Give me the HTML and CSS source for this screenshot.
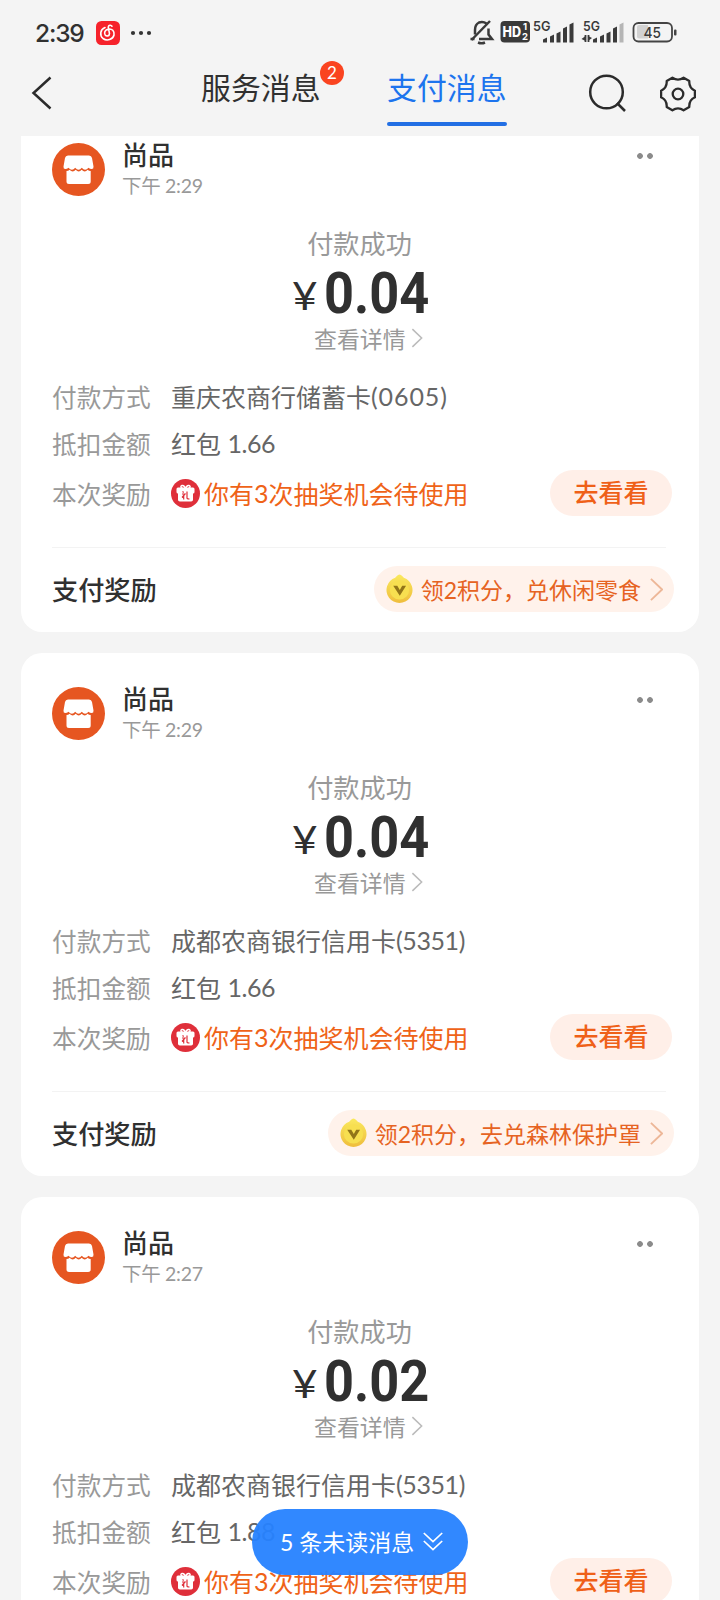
FILE: index.html
```html
<!DOCTYPE html>
<html lang="zh-CN">
<head>
<meta charset="utf-8">
<title>支付消息</title>
<link rel="stylesheet" href="styles.css">
</head>
<body>
<svg class="defs" width="0" height="0">
  <defs>
    <linearGradient id="gold" x1="0" y1="0" x2="0" y2="1"><stop offset="0" stop-color="#fae95e"/><stop offset="1" stop-color="#efbd3c"/></linearGradient>
    <symbol id="shop" viewBox="0 0 53 53">
      <circle cx="26.500" cy="26.500" r="26.500" fill="#e65621"/>
      <path d="M17 12.500h20q2.500 0 3 2.500l1.500 8.500q.3 2.500-1.800 2.500-1.800 0-3.200-1.200-1.700 2-3.400 2t-3.300-2q-1.600 2-3.300 2t-3.300-2q-1.600 2-3.300 2t-3.400-2q-1.400 1.200-3.200 1.200-2.100 0-1.800-2.500l1.500-8.500q.5-2.500 3-2.500z" fill="#fff"/>
      <path d="M14.500 28q2 0 3-1.200 1.700 1.800 3.200 1.800t3-1.800q1.500 1.800 3 1.800t3-1.800q1.500 1.800 3 1.800t3-1.800q1 1.200 3 1.200v10.500q0 2.500-2.500 2.500h-19.200q-2.500 0-2.500-2.500z" fill="#fff"/>
    </symbol>
    <symbol id="gift" viewBox="0 0 29 29">
      <circle cx="14.500" cy="14.500" r="14.500" fill="#df2f3a"/>
      <rect x="5.500" y="8.500" width="18" height="6" rx="1.500" fill="#fff"/>
      <rect x="7" y="12" width="15" height="10.500" rx="1.800" fill="#fff"/>
      <path d="M14.500 10c-5 0-5.500-3-3.500-3.500 1.800-.3 3 1.500 3.500 3.500.5-2 1.700-3.800 3.500-3.500 2 .5 1.500 3.500-3.500 3.500z" fill="none" stroke="#fff" stroke-width="1.500"/>
      <path d="M11.500 12.500l1.200 1M11 15h3l-3 3.500M12.700 16v4.500M16 12.500v6.500q0 1 2.500 1" fill="none" stroke="#df2f3a" stroke-width="1.200"/>
    </symbol>
    <symbol id="coin" viewBox="0 0 28 31">
      <path d="M14 .5q1.500 0 3 1.800l1.500 1.500a13.500 13.500 0 1 1-9 0l1.500-1.500q1.500-1.800 3-1.800z" fill="url(#gold)"/>
      <circle cx="14" cy="16.500" r="10" fill="#f7df50"/>
      <path d="M7.500 12h4.200l2.600 4.500 2.500-4.500h4l-6.500 10.500z" fill="#927518"/>
    </symbol>
    <symbol id="next" viewBox="0 0 14 26"><path d="M1 1.500l12 11.500-12 11.500" fill="none" stroke="currentColor" stroke-width="2"/></symbol>
  </defs>
</svg>

<div class="screen">
  <header class="statusbar">
    <span class="clock">2:39</span>
    <svg class="music" viewBox="0 0 24 24"><rect width="24" height="24" rx="5.500" fill="#f6222b"/><path d="M9 6.500c-5 2-5.500 8-2 11 4 3 10 1 11-3.500.6-4-2-6.500-5.500-6-3.500.7-4.800 3.800-3.300 6 1.300 1.600 4.300 1.200 4.300-1.500L12.300 6.500q0-2.500 2-2.300 1 .1 1.700 1" fill="none" stroke="#fff" stroke-width="1.600" stroke-linecap="round"/></svg>
    <svg class="more" viewBox="0 0 22 6" fill="#333"><circle cx="3" cy="3" r="2.100"/><circle cx="11" cy="3" r="2.100"/><circle cx="19" cy="3" r="2.100"/></svg>
    <svg class="system" viewBox="0 -6 210 38">
      <g fill="none" stroke="#3a3a3a" stroke-width="2.500">
        <path d="M16.500 3.500Q13 1 9 2.500 5 4.500 5 10v4.500M18.500 8.500v6l3.500 4.500H9"/>
        <path d="M20 1L1.500 20"/><path d="M.5 19h4M8 22.500q3.500 1.500 7 0"/>
      </g>
      <rect x="30.500" y="1" width="29.500" height="21.500" rx="4" fill="#3a3a3a"/>
      <text class="hd" x="32.500" y="16.500" textLength="18.500" lengthAdjust="spacingAndGlyphs">HD</text><text class="tiny" x="53" y="10">1</text><text class="tiny" x="52" y="20">2</text>
      <text class="net" x="63" y="11" textLength="17.500" lengthAdjust="spacingAndGlyphs">5G</text>
      <g fill="#3a3a3a"><path d="M73 22.500v-3l4-2v5zM80 22.500v-6l4-2v8zM86.500 22.500v-9l4-2v11zM93 22.500V8.500l4-2v16zM99.500 22.500V4.500l4-2v20z"/></g>
      <text class="net" x="113" y="11" textLength="17" lengthAdjust="spacingAndGlyphs">5G</text>
      <path d="M115.500 15v7M118.500 22v-7" stroke="#3a3a3a" stroke-width="1.800"/>
      <path d="M111.500 19l4-3v5zM122 18l-4 3v-5z" fill="#3a3a3a"/>
      <path d="M123 22.500v-3l4-2v5zM130 22.500v-6l4-2v8zM136.500 22.500v-9l4-2v11zM143 22.500V8.500l4-2v16z" fill="#3a3a3a"/><path d="M149.500 22.500V4.500l4-2v20z" fill="#b5b5b5"/>
      <path d="M169 5h9v13.500h-9q-2 0-2-2V7q0-2 2-2z" fill="#d2d2d2"/>
      <rect x="163.500" y="3" width="38.500" height="18.500" rx="5" fill="none" stroke="#444" stroke-width="1.800"/>
      <rect x="204" y="9.500" width="2.500" height="6" rx="1" fill="#444"/>
      <text class="batt" x="173.500" y="17.800" textLength="17.500" lengthAdjust="spacingAndGlyphs">45</text>
    </svg>
  </header>

  <nav class="navbar">
    <svg class="back" viewBox="0 0 22 34"><path d="M19.500 1.500L2.500 17l17 15.500" fill="none" stroke="#2b2b2b" stroke-width="2.500"/></svg>
    <div class="tab tab-service">服务消息<span class="badge">2</span></div>
    <div class="tab tab-pay">支付消息</div>
    <svg class="search" viewBox="0 0 40 40" fill="none" stroke="#2b2b2b" stroke-width="2.500"><circle cx="18.500" cy="18" r="16.300"/><path d="M29 29l8 8"/></svg>
    <svg class="gear" viewBox="0 0 36 36" fill="none" stroke="#2b2b2b" stroke-width="2.300" stroke-linejoin="round"><path d="M34.900 14.700V21.300Q28.800 24.200 29.300 31L23.600 34.300Q18 30.500 12.400 34.300L6.700 31Q7.200 24.200 1.100 21.300V14.700Q7.200 11.800 6.700 5L12.400 1.700Q18 5.500 23.600 1.700L29.300 5Q28.800 11.800 34.900 14.700z"/><circle cx="18" cy="18" r="5.300"/></svg>
  </nav>

  <main class="feed">
    <article class="card">
      <header class="merchant"><svg class="avatar"><use href="#shop"/></svg><div><h2>尚品</h2><time>下午 2:29</time></div><i class="dots"></i></header>
      <p class="state">付款成功</p>
      <p class="amount"><span class="yen">¥</span><b>0.04</b></p>
      <a class="detail">查看详情<svg><use href="#next"/></svg></a>
      <dl>
        <div><dt>付款方式</dt><dd>重庆农商行储蓄卡<span class="num">(0605)</span></dd></div>
        <div><dt>抵扣金额</dt><dd>红包 <span class="num narrow">1.66</span></dd></div>
        <div class="award"><dt>本次奖励</dt><dd><svg><use href="#gift"/></svg>你有<span>3</span>次抽奖机会待使用</dd><button>去看看</button></div>
      </dl>
      <footer><h3>支付奖励</h3><a class="pill"><svg class="coin"><use href="#coin"/></svg>领2积分，兑休闲零食<svg class="arrow"><use href="#next"/></svg></a></footer>
    </article>

    <article class="card">
      <header class="merchant"><svg class="avatar"><use href="#shop"/></svg><div><h2>尚品</h2><time>下午 2:29</time></div><i class="dots"></i></header>
      <p class="state">付款成功</p>
      <p class="amount"><span class="yen">¥</span><b>0.04</b></p>
      <a class="detail">查看详情<svg><use href="#next"/></svg></a>
      <dl>
        <div><dt>付款方式</dt><dd>成都农商银行信用卡<span class="num narrow">(5351)</span></dd></div>
        <div><dt>抵扣金额</dt><dd>红包 <span class="num narrow">1.66</span></dd></div>
        <div class="award"><dt>本次奖励</dt><dd><svg><use href="#gift"/></svg>你有<span>3</span>次抽奖机会待使用</dd><button>去看看</button></div>
      </dl>
      <footer><h3>支付奖励</h3><a class="pill"><svg class="coin"><use href="#coin"/></svg>领2积分，去兑森林保护罩<svg class="arrow"><use href="#next"/></svg></a></footer>
    </article>

    <article class="card">
      <header class="merchant"><svg class="avatar"><use href="#shop"/></svg><div><h2>尚品</h2><time>下午 2:27</time></div><i class="dots"></i></header>
      <p class="state">付款成功</p>
      <p class="amount"><span class="yen">¥</span><b>0.02</b></p>
      <a class="detail">查看详情<svg><use href="#next"/></svg></a>
      <dl>
        <div><dt>付款方式</dt><dd>成都农商银行信用卡<span class="num narrow">(5351)</span></dd></div>
        <div><dt>抵扣金额</dt><dd>红包 <span class="num narrow">1.88</span></dd></div>
        <div class="award"><dt>本次奖励</dt><dd><svg><use href="#gift"/></svg>你有<span>3</span>次抽奖机会待使用</dd><button>去看看</button></div>
      </dl>
    </article>
  </main>
  <div class="unread">5 条未读消息<svg viewBox="0 0 20 19" fill="none" stroke="#fff" stroke-width="1.700"><path d="M.8 1l9.200 8.500L19.200 1M.8 9l9.200 8.500L19.200 9"/></svg></div>
</div>
</body>
</html>
```

FILE: styles.css
```css
* { box-sizing: border-box; margin: 0; padding: 0; }
body { background: #f4f4f4; color: #303030; font-family: Lato, "Noto Sans CJK SC", sans-serif; font-weight: 400; }
svg { display: block; flex: none; }
.defs { position: absolute; }
.screen { position: relative; width: 720px; height: 1600px; overflow: hidden; display: flex; flex-direction: column; }

.statusbar { height: 60px; display: flex; align-items: center; padding: 6px 39px 0 35px; flex: none; }
.clock { font: 500 24.500px/30px Inter, sans-serif; width: 49px; letter-spacing: -1.200px; white-space: nowrap; }
.music { width: 24px; height: 24px; margin-left: 12px; }
.more { width: 22px; height: 6px; margin-left: 10px; }
.system { width: 210px; height: 38px; margin-left: auto; margin-right: 1px; overflow: visible; }
.system text { font-family: Inter, sans-serif; fill: #3a3a3a; }
.system .hd { font-size: 14px; font-weight: 800; fill: #fff; }
.system .tiny { font-size: 9.500px; font-weight: 700; fill: #fff; }
.system .net { font-size: 13.500px; font-weight: 600; }
.system .batt { font-size: 15px; font-weight: 500; }

.navbar { height: 76px; flex: none; display: flex; align-items: flex-start; padding-left: 31px; }
.back { width: 22px; height: 34px; margin-top: 16px; }
.tab { position: relative; width: 120px; height: 66px; font-size: 29.900px; line-height: 55px; white-space: nowrap; }
.tab-service { margin-left: 148px; }
.tab-pay { margin-left: 66px; color: #1d74ee; }
.tab-pay::after { content: ""; position: absolute; left: 0; bottom: 0; width: 120px; height: 4px; border-radius: 2px; background: #226fe4; }
.badge { position: absolute; left: 119px; top: 1px; width: 24px; height: 24px; border-radius: 50%; background: #fa4420; color: #fff; font-size: 17px; line-height: 24px; text-align: center; }
.search { width: 40px; height: 40px; margin: 14px 0 0 81px; }
.gear { width: 36px; height: 36px; margin: 16px 0 0 32px; }

.feed { flex: 1; min-height: 0; overflow: hidden; padding: 0 21px; }
.card { height: 523px; padding: 34px 25px 0 31px; margin-bottom: 21px; background: #fff; border-radius: 21px; }
.card:first-child { margin-top: -27px; }
.merchant { height: 53px; display: flex; }
.avatar { width: 53px; height: 53px; margin-right: 17px; }
.merchant h2 { font-size: 26px; line-height: 24px; font-weight: 500; }
.merchant time { display: block; font-size: 19.500px; line-height: 24px; margin-top: 7px; letter-spacing: -.3px; color: #999; }
.dots { width: 16px; height: 6px; margin: 10px 21px 0 auto; background: radial-gradient(circle at 3px 3px, #8b8b8b 2.500px, transparent 3.200px) 0 0 / 10px 6px; }
.state { height: 30px; margin-top: 33px; text-align: center; font-size: 26.200px; line-height: 31px; color: #999; text-indent: -7px; }
.amount { height: 54px; margin-top: 8px; display: flex; align-items: center; padding-left: 240px; }
.yen { width: 32px; font: 400 38px/54px Lato, sans-serif; transform: translateY(1px) scaleX(1.16); transform-origin: left; }
.amount b { font: 700 57.500px/54px Roboto, sans-serif; transform: scaleX(.91); transform-origin: left; }
.detail { height: 30px; margin-top: 2px; padding-left: 262px; display: flex; align-items: center; font-size: 22.900px; color: #999; }
.detail svg { width: 12px; height: 20px; margin-left: 5px; color: #bbb; }
dl { margin-top: 19px; color: #666; font-size: 25px; }
dl div { height: 47px; display: flex; align-items: center; }
dl .award { height: 54px; color: #ef6318; }
dt { width: 119px; color: #999; font-size: 24.700px; }
dd { display: flex; align-items: center; white-space: pre; }
dd svg { width: 29px; height: 29px; margin-right: 4px; }
.num { letter-spacing: .9px; }
.num.narrow { letter-spacing: -.4px; }
button { width: 122px; height: 46px; margin: 0 2px 0 auto; border: 0; border-radius: 23px; background: #ffefe8; color: #ef6018; font: 500 25px/44px Lato, "Noto Sans CJK SC", sans-serif; padding-bottom: 2px; }
.card footer { height: 84px; margin: 27px 0 0; display: flex; align-items: center; justify-content: space-between; background: linear-gradient(#f3f3f3, #f3f3f3) 0 0 / 614px 1px no-repeat; }
h3 { font-size: 26.200px; font-weight: 500; }
.pill { height: 46px; display: flex; align-items: center; padding: 0 11px 0 12px; border-radius: 23px; background: #fff2eb; color: #e66322; font-size: 23px; white-space: nowrap; }
.coin { width: 27px; height: 30px; margin-right: 8px; }
.arrow { width: 13px; height: 25px; margin-left: 9px; color: #edb798; }
.unread { position: absolute; left: 252px; top: 1509px; width: 216px; height: 66px; border-radius: 33px; padding: 0 0 2px 28px; display: flex; align-items: center; background: rgba(38, 130, 255, .95); color: #fff; font-size: 23px; white-space: nowrap; }
.unread svg { width: 20px; height: 19px; margin-left: 9px; }
```
